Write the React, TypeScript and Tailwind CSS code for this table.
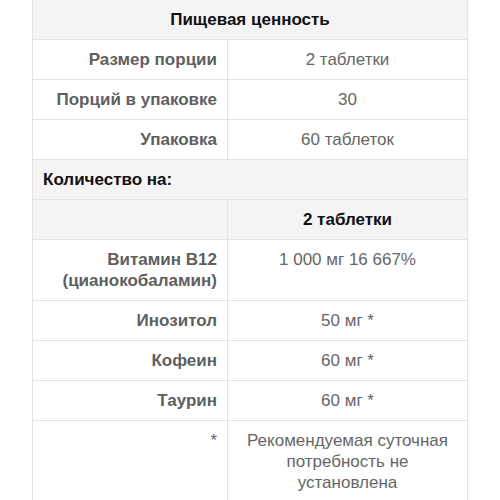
import React from 'react';

const rows = [
  { label: 'Размер порции', value: '2 таблетки' },
  { label: 'Порций в упаковке', value: '30' },
  { label: 'Упаковка', value: '60 таблеток' },
];

const nutrients = [
  { label: ['Витамин B12', '(цианокобаламин)'], value: '1 000 мг 16 667%' },
  { label: ['Инозитол'], value: '50 мг *' },
  { label: ['Кофеин'], value: '60 мг *' },
  { label: ['Таурин'], value: '60 мг *' },
];

const cell = 'border border-[#e3e3e3] px-[10px] py-[9px] align-top';

export default function App() {
  return (
    <div className="w-[500px] h-[500px] overflow-hidden bg-white font-['Liberation_Sans',Arial,sans-serif] text-[17px] leading-[21px]">
      <table className="ml-[32px] mt-[-1px] w-[436px] table-fixed border-collapse">
        <colgroup>
          <col className="w-[195px]" />
          <col />
        </colgroup>
        <tbody>
          {/* Header */}
          <tr className="bg-[#f4f4f5]">
            <th colSpan={2} className={`${cell} text-center font-bold text-[#111]`}>
              Пищевая ценность
            </th>
          </tr>
          {rows.map((r) => (
            <tr key={r.label}>
              <td className={`${cell} text-right font-bold text-[#5f5f5f]`}>{r.label}</td>
              <td className={`${cell} text-center text-[#666]`}>{r.value}</td>
            </tr>
          ))}
          <tr className="bg-[#f4f4f5]">
            <td colSpan={2} className={`${cell} text-left font-bold text-[#111]`}>
              Количество на:
            </td>
          </tr>
          <tr className="bg-[#f4f4f5]">
            <td className={cell}></td>
            <td className={`${cell} text-center font-bold text-[#111]`}>2 таблетки</td>
          </tr>
          {nutrients.map((n) => (
            <tr key={n.label[0]}>
              <td className={`${cell} text-right font-bold text-[#5f5f5f]`}>
                {n.label.map((l) => (
                  <div key={l}>{l}</div>
                ))}
              </td>
              <td className={`${cell} text-center text-[#666]`}>{n.value}</td>
            </tr>
          ))}
          <tr>
            <td className={`${cell} text-right text-[#666]`}>*</td>
            <td className={`${cell} text-center text-[#666]`}>
              Рекомендуемая суточная потребность не установлена
            </td>
          </tr>
        </tbody>
      </table>
    </div>
  );
}
